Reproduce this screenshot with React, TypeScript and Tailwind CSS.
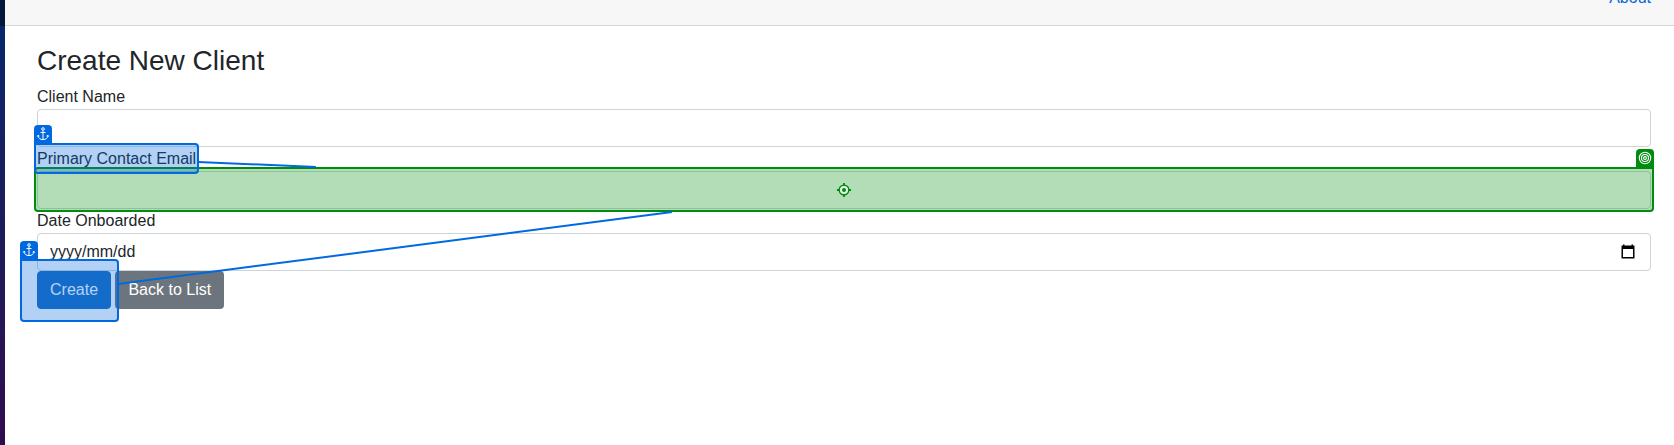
import type { ReactNode } from 'react';

function Field({ label, children }: { label: string; children?: ReactNode }) {
  return (
    <div className="flex flex-col">
      <label className="h-6 leading-6">{label}</label>
      <div className="flex h-[38px] items-center justify-between rounded border border-[#ced4da] bg-white px-3">
        {children}
      </div>
    </div>
  );
}

function AnchorIcon() {
  return (
    <svg width="14" height="14" viewBox="0 0 14 14" fill="none" stroke="#fff" strokeWidth="1" className="-mt-px">
      <circle cx="7" cy="2" r="1.3" />
      <path d="M7 3.3v9.7M4.5 5.5h5M2 8.6c.2 2.6 2.2 4 5 4s4.8-1.4 5-4M1.3 9.6L2 8.3l1.4.8M12.7 9.6L12 8.3l-1.4.8" />
    </svg>
  );
}

function TargetIcon() {
  return (
    <svg width="14" height="14" viewBox="0 0 14 14" fill="none" stroke="#fff" strokeWidth="1.1" className="-mt-px">
      <circle cx="7" cy="7" r="5.7" />
      <circle cx="7" cy="7" r="3.5" />
      <circle cx="7" cy="7" r="1.4" />
    </svg>
  );
}

function CrosshairIcon() {
  return (
    <svg width="14" height="14" viewBox="0 0 14 14" fill="none" stroke="#008c0f" strokeWidth="1.5">
      <circle cx="7" cy="7" r="4.8" fill="#e6f5e7" />
      <path d="M7 0v3M7 11v3M0 7h3M11 7h3" strokeWidth="1.8" />
      <circle cx="7" cy="7" r="2" fill="#008c0f" stroke="none" />
    </svg>
  );
}

function CalendarIcon() {
  return (
    <svg width="14" height="15" viewBox="0 0 14 15" className="-mt-px mr-[3px]">
      <path d="M1 1.5h12a.5.5 0 0 1 .5.5v12a.5.5 0 0 1-.5.5H1a.5.5 0 0 1-.5-.5V2a.5.5 0 0 1 .5-.5ZM2 5v8h10V5Z" fill="#000" fillRule="evenodd" />
      <path d="M2 .5h1.5v2H2zM10.5.5H12v2h-1.5z" fill="#000" />
    </svg>
  );
}

export default function App() {
  return (
    <div className="relative flex h-[445px] w-[1674px] overflow-hidden bg-white font-['Liberation_Sans',Arial,sans-serif] text-base text-[#212529]">
      <div className="flex w-[5px] shrink-0 flex-col">
        <div className="h-[26px] bg-[#03173d]" />
        <div className="flex-1 bg-linear-to-b from-[#07276b] via-[#1c1b5b] to-[#300b4e]" />
      </div>
      <div className="flex flex-1 flex-col">
        <header className="flex h-[26px] shrink-0 items-end justify-end border-b border-[#d6d5d5] bg-[#f7f7f7] pr-[23px]">
          <a className="mb-[15px] h-6 leading-6 text-[#0366d6]">About</a>
        </header>
        <main className="flex flex-col pt-[18px] pr-[23px] pl-8">
          <h1 className="mb-2 h-[33px] text-[28px] leading-[33px]">Create New Client</h1>
          <Field label="Client Name" />
          <Field label="Primary Contact Email" />
          <Field label="Date Onboarded">
            <span>yyyy/mm/dd</span>
            <CalendarIcon />
          </Field>
          <div className="flex gap-[4.4px]">
            <button className="h-[38px] rounded border border-[#1b6ec2] bg-[#1b6ec2] px-3 text-white">Create</button>
            <button className="h-[38px] rounded bg-[#6c757d] px-[13px] text-white">Back to List</button>
          </div>
        </main>
      </div>

      <div className="absolute top-[167px] left-[34px] flex h-[45px] w-[1620px] items-center justify-center rounded-[4px] rounded-tr-none border-2 border-[#008c0f] bg-[#008f0f]/30">
        <CrosshairIcon />
      </div>
      <div className="absolute top-[149px] left-[1636px] flex h-[19px] w-[18px] items-center justify-center rounded-t-[4px] bg-[#008c0f]">
        <TargetIcon />
      </div>
      <svg className="absolute inset-0" width="1674" height="445" fill="none" stroke="#0069e0" strokeWidth="2">
        <path d="M198 162L316 167M118 284L672 212" />
      </svg>
      <div className="absolute top-[143px] left-[34px] h-[31px] w-[165px] rounded-[4px] rounded-tl-none border-2 border-[#0069e0] bg-[#0069e0]/30" />
      <div className="absolute top-[125px] left-[34px] flex h-[19px] w-[18px] items-center justify-center rounded-t-[4px] bg-[#0069e0]">
        <AnchorIcon />
      </div>
      <div className="absolute top-[259px] left-[20px] h-[63px] w-[99px] rounded-[4px] rounded-tl-none border-2 border-[#0069e0] bg-[#0069e0]/30" />
      <div className="absolute top-[241px] left-[20px] flex h-[19px] w-[18px] items-center justify-center rounded-t-[4px] bg-[#0069e0]">
        <AnchorIcon />
      </div>
    </div>
  );
}
